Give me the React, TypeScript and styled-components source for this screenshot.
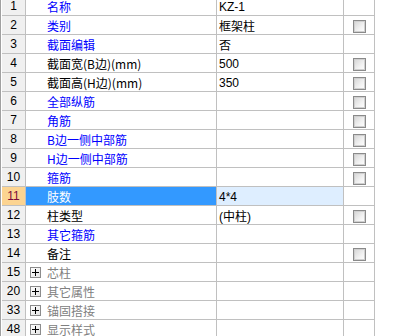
import React from "react";
import styled, { createGlobalStyle, css } from "styled-components";

const Global = createGlobalStyle`
  html, body { margin: 0; padding: 0; background: #ffffff; overflow: hidden; }
  body { font-family: "Liberation Sans", "Noto Sans CJK SC", sans-serif; }
`;

const Viewport = styled.div`
  width: 394px;
  height: 336px;
  overflow: hidden;
  background: #ffffff;
`;

const Grid = styled.div`
  margin-top: -3px;
  width: 374px;
  border-left: 1px solid #a0a0a0;
  padding-left: 1px;
  display: flex;
  flex-direction: column;
`;

const Row = styled.div`
  display: grid;
  grid-template-columns: 24px 191px 127px 31px;
  height: 19px;
`;

const Cell = styled.div`
  box-sizing: border-box;
  border-right: 1px solid #c0c0c0;
  border-bottom: 1px solid #c0c0c0;
  display: flex;
  align-items: center;
  min-width: 0;
  overflow: hidden;
  white-space: nowrap;
`;

const NumCell = styled(Cell)<{ $active?: boolean }>`
  justify-content: center;
  background: ${(p) => (p.$active ? "#fcd491" : "#f0f0f0")};
  color: ${(p) => (p.$active ? "#7a0a3a" : "#000000")};
  font-family: "Liberation Sans", sans-serif;
  font-size: 12px;
`;

type Tone = "blue" | "black" | "gray";

const toneColor: Record<Tone, string> = {
  blue: "#0000ff",
  black: "#000000",
  gray: "#808080",
};

const NameCell = styled(Cell)<{ $tone: Tone; $active?: boolean; $group?: boolean }>`
  padding-left: ${(p) => (p.$group ? "4px" : "21px")};
  padding-top: 2px;
  gap: 6px;
  font-family: "Noto Sans CJK SC", sans-serif;
  font-size: 12px;
  color: ${(p) => (p.$active ? "#ffffff" : toneColor[p.$tone])};
  ${(p) =>
    p.$active &&
    css`
      background: #3399ff;
    `}
`;

const ValueCell = styled(Cell)<{ $active?: boolean }>`
  padding-left: 2px;
  padding-top: 1px;
  font-family: "Liberation Sans", "Noto Sans CJK SC", sans-serif;
  font-size: 12px;
  color: #000000;
  ${(p) =>
    p.$active &&
    css`
      background: #deeeff;
    `}
`;

const CheckCell = styled(Cell)`
  justify-content: center;
  padding-top: 3px;
  padding-left: 1px;
`;

const CheckBox = styled.span`
  box-sizing: border-box;
  width: 13px;
  height: 13px;
  border: 1px solid #8a8a8a;
  box-shadow: inset 0 0 0 1px #d0d0d0;
  background: linear-gradient(135deg, #d4d4d4 0%, #f2f2f2 60%, #ffffff 100%);
`;

const PlusBox = styled.span`
  box-sizing: border-box;
  width: 11px;
  height: 11px;
  margin-top: -2px;
  border: 1px solid #8c8c8c;
  background: linear-gradient(135deg, #ffffff 0%, #e4e4e4 100%);
  display: flex;
  align-items: center;
  justify-content: center;
  flex: none;
`;

const NameText = styled.span`
  line-height: 16px;
`;

type RowData = {
  n: number;
  name: string;
  tone: Tone;
  value?: string;
  check?: boolean;
  group?: boolean;
  active?: boolean;
};

const rows: RowData[] = [
  { n: 1, name: "名称", tone: "blue", value: "KZ-1" },
  { n: 2, name: "类别", tone: "blue", value: "框架柱", check: true },
  { n: 3, name: "截面编辑", tone: "blue", value: "否" },
  { n: 4, name: "截面宽(B边)(mm)", tone: "black", value: "500", check: true },
  { n: 5, name: "截面高(H边)(mm)", tone: "black", value: "350", check: true },
  { n: 6, name: "全部纵筋", tone: "blue", check: true },
  { n: 7, name: "角筋", tone: "blue", check: true },
  { n: 8, name: "B边一侧中部筋", tone: "blue", check: true },
  { n: 9, name: "H边一侧中部筋", tone: "blue", check: true },
  { n: 10, name: "箍筋", tone: "blue", check: true },
  { n: 11, name: "肢数", tone: "blue", value: "4*4", active: true },
  { n: 12, name: "柱类型", tone: "black", value: "(中柱)", check: true },
  { n: 13, name: "其它箍筋", tone: "blue" },
  { n: 14, name: "备注", tone: "black", check: true },
  { n: 15, name: "芯柱", tone: "gray", group: true },
  { n: 20, name: "其它属性", tone: "gray", group: true },
  { n: 33, name: "锚固搭接", tone: "gray", group: true },
  { n: 48, name: "显示样式", tone: "gray", group: true },
];

const PlusIcon = () => (
  <svg width="7" height="7" viewBox="0 0 7 7">
    <path d="M0 3.5H7M3.5 0V7" stroke="#000" strokeWidth="1" />
  </svg>
);

export default function App() {
  return (
    <Viewport>
      <Global />
      <Grid>
        {rows.map((r) => (
          <Row key={r.n}>
            <NumCell $active={r.active}>{r.n}</NumCell>
            <NameCell $tone={r.tone} $active={r.active} $group={r.group}>
              {r.group && (
                <PlusBox>
                  <PlusIcon />
                </PlusBox>
              )}
              <NameText>{r.name}</NameText>
            </NameCell>
            <ValueCell $active={r.active}>{r.value}</ValueCell>
            <CheckCell>{r.check && <CheckBox />}</CheckCell>
          </Row>
        ))}
      </Grid>
    </Viewport>
  );
}
